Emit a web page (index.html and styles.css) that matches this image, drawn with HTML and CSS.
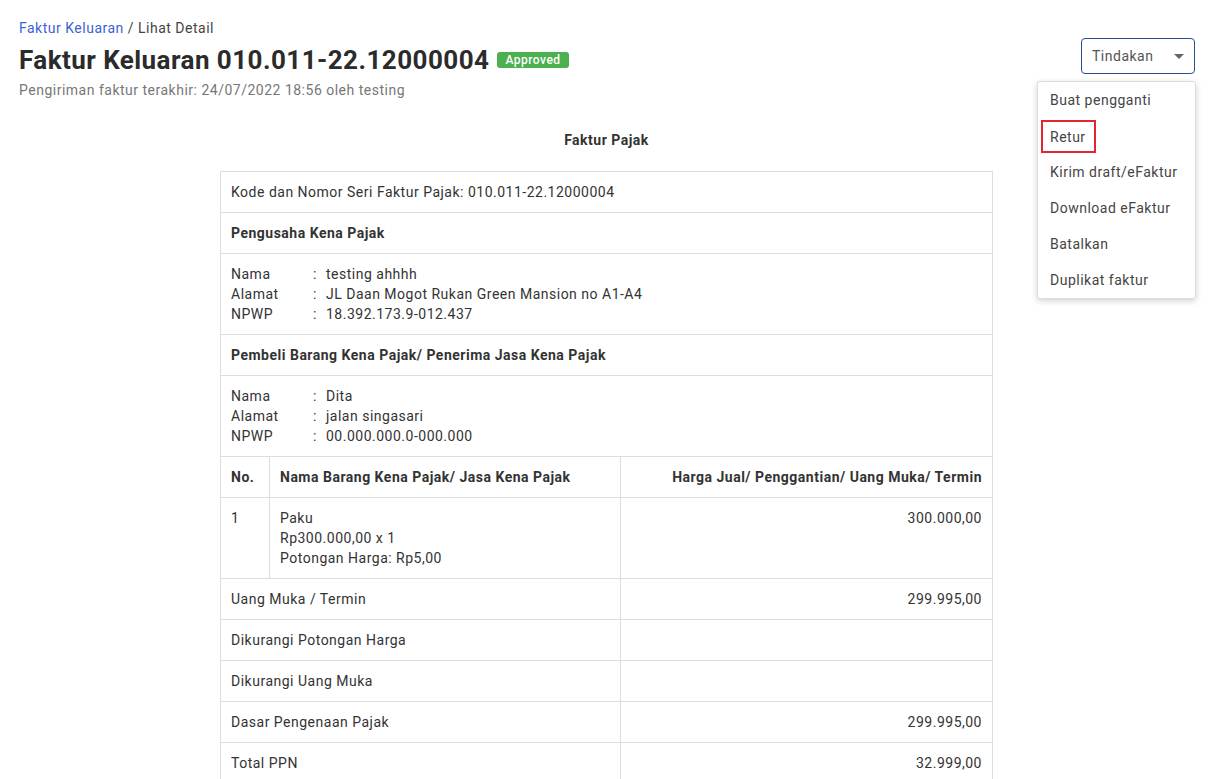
FILE: index.html
```html
<!DOCTYPE html>
<html lang="id">
<head>
  <meta charset="UTF-8" />
  <meta name="viewport" content="width=device-width, initial-scale=1.0"/>
  <title>Faktur Keluaran - Lihat Detail</title>
  <link rel="stylesheet" href="styles.css">
</head>
<body>

  <div class="page">
    <div class="page-head">
      <div class="head-left">
        <div class="crumbs"><a href="#">Faktur Keluaran</a> / Lihat Detail</div>
        <h1>Faktur Keluaran 010.011-22.12000004 <span class="badge">Approved</span></h1>
        <p class="sub">Pengiriman faktur terakhir: 24/07/2022 18:56 oleh testing</p>
      </div>

      <!-- actions dropdown, opened -->
      <div class="actions">
        <button class="act-btn">Tindakan <span class="caret"></span></button>
        <ul class="act-menu">
          <li>Buat pengganti</li>
          <li><span class="mark">Retur</span></li>
          <li>Kirim draft/eFaktur</li>
          <li>Download eFaktur</li>
          <li>Batalkan</li>
          <li>Duplikat faktur</li>
        </ul>
      </div>
    </div>

    <h2 class="doc-title">Faktur Pajak</h2>

    <table class="faktur">
      <tr>
        <td colspan="3">Kode dan Nomor Seri Faktur Pajak: 010.011-22.12000004</td>
      </tr>
      <tr>
        <th colspan="3">Pengusaha Kena Pajak</th>
      </tr>
      <tr>
        <td colspan="3">
          <div class="info">
            <span>Nama</span><span>:</span><span>testing ahhhh</span>
            <span>Alamat</span><span>:</span><span>JL Daan Mogot Rukan Green Mansion no A1-A4</span>
            <span>NPWP</span><span>:</span><span>18.392.173.9-012.437</span>
          </div>
        </td>
      </tr>
      <tr>
        <th colspan="3">Pembeli Barang Kena Pajak/ Penerima Jasa Kena Pajak</th>
      </tr>
      <tr>
        <td colspan="3">
          <div class="info">
            <span>Nama</span><span>:</span><span>Dita</span>
            <span>Alamat</span><span>:</span><span>jalan singasari</span>
            <span>NPWP</span><span>:</span><span>00.000.000.0-000.000</span>
          </div>
        </td>
      </tr>
      <tr>
        <th class="col-no">No.</th>
        <th class="col-name">Nama Barang Kena Pajak/ Jasa Kena Pajak</th>
        <th class="num">Harga Jual/ Penggantian/ Uang Muka/ Termin</th>
      </tr>
      <tr>
        <td>1</td>
        <td>Paku<br>Rp300.000,00 x 1<br>Potongan Harga: Rp5,00</td>
        <td class="num">300.000,00</td>
      </tr>
      <tr>
        <td colspan="2">Uang Muka / Termin</td>
        <td class="num">299.995,00</td>
      </tr>
      <tr>
        <td colspan="2">Dikurangi Potongan Harga</td>
        <td class="num"></td>
      </tr>
      <tr>
        <td colspan="2">Dikurangi Uang Muka</td>
        <td class="num"></td>
      </tr>
      <tr>
        <td colspan="2">Dasar Pengenaan Pajak</td>
        <td class="num">299.995,00</td>
      </tr>
      <tr>
        <td colspan="2">Total PPN</td>
        <td class="num">32.999,00</td>
      </tr>
    </table>
  </div>

</body>
</html>
```

FILE: styles.css
```css
body {
  margin: 0;
  font-family: Roboto, "Liberation Sans", sans-serif;
  color: #333;
  background: #fff;
}

.page {
  padding: 18px 18px 40px 19px;
}

.page-head {
  display: flex;
  justify-content: space-between;
  align-items: flex-start;
}

.crumbs {
  font-size: 14px;
  line-height: 20px;
  color: #444;
  letter-spacing: 0.5px;
}

.crumbs a {
  color: #3b63d3;
  text-decoration: none;
}

h1 {
  margin: 6px 0 0;
  font-size: 26px;
  line-height: 32px;
  font-weight: 700;
  color: #2b2b2b;
  letter-spacing: 0.45px;
  display: flex;
  align-items: center;
  gap: 8px;
}

.badge {
  background-color: #4caf50;
  color: white;
  font-size: 12px;
  font-weight: 500;
  line-height: 16px;
  padding: 0 8px;
  border-radius: 3px;
  letter-spacing: 0.5px;
}

.sub {
  margin: 4px 0 0;
  font-size: 14px;
  line-height: 20px;
  color: #777;
  letter-spacing: 0.5px;
}

.actions {
  position: relative;
  margin-top: 20px;
  margin-right: -1px;
}

.act-btn {
  width: 114px;
  height: 36px;
  padding: 0 10px;
  background: white;
  border: 1.5px solid #23508e;
  border-radius: 4px;
  font-family: inherit;
  font-size: 14px;
  color: #555;
  letter-spacing: 0.5px;
  display: flex;
  align-items: center;
  justify-content: space-between;
}

.caret {
  width: 0;
  height: 0;
  border-left: 5px solid transparent;
  border-right: 5px solid transparent;
  border-top: 5px solid #666;
}

.act-menu {
  position: absolute;
  top: 43px;
  right: -1px;
  width: 157px;
  margin: 0;
  padding: 0;
  list-style: none;
  background: white;
  border: 1px solid #ddd;
  border-radius: 3px;
  box-shadow: 0 2px 6px rgba(0, 0, 0, 0.18);
}

.act-menu li {
  height: 36px;
  padding: 0 12px;
  display: flex;
  align-items: center;
  font-size: 14px;
  color: #444;
  letter-spacing: 0.5px;
  white-space: nowrap;
}

.act-menu .mark {
  margin-left: -9px;
  padding: 5px 8px 4px 7px;
  line-height: 20px;
  border: 2px solid #e0262f;
}

.doc-title {
  margin: 30px 0 0;
  text-align: center;
  font-size: 14px;
  line-height: 20px;
  font-weight: 700;
  letter-spacing: 0.5px;
}

.faktur {
  width: 773px;
  margin: 21px auto 0;
  border-collapse: collapse;
  font-size: 14px;
  line-height: 20px;
  letter-spacing: 0.5px;
  color: #333;
}

.faktur td,
.faktur th {
  border: 1px solid #ddd;
  padding: 10px;
  text-align: left;
  vertical-align: top;
}

.faktur th {
  font-weight: 700;
}

.faktur .col-no {
  width: 28px;
}

.faktur .col-name {
  width: 330px;
}

.faktur .num {
  text-align: right;
}

.info {
  display: grid;
  grid-template-columns: 82px 13px auto;
}
```
